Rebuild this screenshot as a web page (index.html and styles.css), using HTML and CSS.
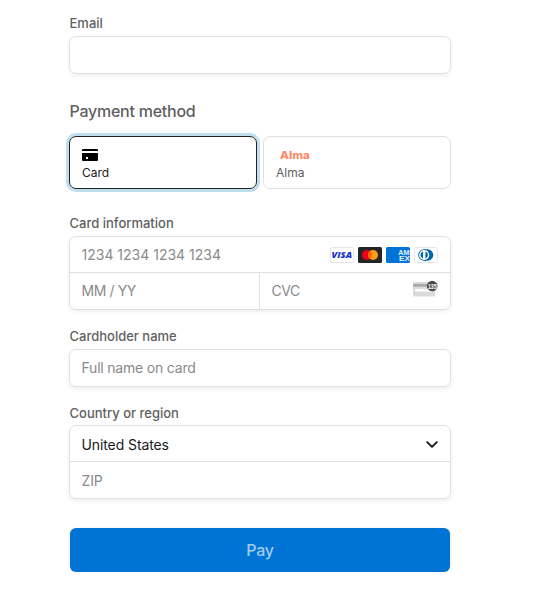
FILE: index.html
```html
<!DOCTYPE html>
<html lang="en">
  <head>
    <meta charset="utf-8">
    <meta name="viewport" content="width=device-width">
    <title>Payment</title>
    <link rel="stylesheet" href="styles.css">
  </head>
  <body>
    <form class="checkout">
      <div class="field field-email">
        <label for="email">Email</label>
        <div class="box"><input id="email" type="text"></div>
      </div>

      <h2>Payment method</h2>
      <div class="tabs">
        <div class="tab selected">
          <svg class="tab-icon" width="16" height="12" viewBox="0 0 16 12">
            <path d="M1 0h14a1 1 0 0 1 1 1v1H0V1a1 1 0 0 1 1-1z"/>
            <path d="M0 4h16v7a1 1 0 0 1-1 1H1a1 1 0 0 1-1-1z"/>
            <rect x="4" y="8" width="2" height="2" fill="#fff"/>
          </svg>
          <span>Card</span>
        </div>
        <div class="tab">
          <svg class="alma-logo" width="38" height="12" viewBox="0 0 38 12">
            <text x="4" y="10" textLength="30" lengthAdjust="spacingAndGlyphs">Alma</text>
          </svg>
          <span>Alma</span>
        </div>
      </div>

      <div class="field field-card">
        <label for="number">Card information</label>
        <div class="box">
          <div class="row">
            <input id="number" class="number" type="text" placeholder="1234 1234 1234 1234">
            <div class="brands">
              <svg width="24" height="16" viewBox="0 0 24 16">
                <rect x=".5" y=".5" width="23" height="15" rx="1" fill="#fff" stroke="#e6e6e6"/>
                <text class="visa" x="1.6" y="11.4" textLength="20.4" lengthAdjust="spacingAndGlyphs">VISA</text>
              </svg>
              <svg width="24" height="16" viewBox="0 0 24 16">
                <rect width="24" height="16" rx="1.5" fill="#252525"/>
                <circle cx="9" cy="8" r="5" fill="#eb001b"/>
                <circle cx="15" cy="8" r="5" fill="#f79e1b"/>
                <path d="M12 4a5 5 0 0 1 0 8 5 5 0 0 1 0-8z" fill="#ff5f00"/>
              </svg>
              <svg width="24" height="16" viewBox="0 0 24 16">
                <rect width="24" height="16" rx="1.5" fill="#0074d4"/>
                <text class="amex" x="12.2" y="7.6" textLength="11.2" lengthAdjust="spacingAndGlyphs">AM</text>
                <text class="amex" x="13" y="14" textLength="11" lengthAdjust="spacingAndGlyphs">EX</text>
              </svg>
              <svg width="24" height="16" viewBox="0 0 24 16">
                <rect x=".5" y=".5" width="23" height="15" rx="1" fill="#fff" stroke="#e6e6e6"/>
                <path d="M10 2.2h3.5a5.8 5.8 0 0 1 0 11.6H10z" fill="#0165ac"/>
                <circle cx="10" cy="8" r="5.8" fill="#0165ac"/>
                <circle cx="10.2" cy="8" r="5.1" fill="#fff"/>
                <path d="M9 4.4a3.8 3.8 0 0 0 0 7.2zM11.4 4.4a3.8 3.8 0 0 1 0 7.2z" fill="#0165ac"/>
              </svg>
            </div>
          </div>
          <div class="row">
            <input class="expiry" type="text" placeholder="MM / YY">
            <input class="cvc" type="text" placeholder="CVC">
            <svg class="cvc-icon" width="26" height="18" viewBox="0 0 26 18">
              <rect x="0" y="2" width="22" height="14.5" rx="1.5" fill="#dadada"/>
              <rect x="0" y="4" width="22" height="2.6" fill="#a9a9a9"/>
              <rect x="2" y="9" width="18" height="2.5" rx="1" fill="#fff"/>
              <circle cx="19.2" cy="6" r="5.3" fill="#4a4a4a"/>
              <text class="cvc-digits" x="15" y="8.6" textLength="8.6" lengthAdjust="spacingAndGlyphs">135</text>
            </svg>
          </div>
        </div>
      </div>

      <div class="field field-name">
        <label for="name">Cardholder name</label>
        <div class="box"><input id="name" type="text" placeholder="Full name on card"></div>
      </div>

      <div class="field field-country">
        <label for="country">Country or region</label>
        <div class="box">
          <div class="row">
            <select id="country">
              <option>United States</option>
            </select>
            <svg class="chevron" width="12" height="12" viewBox="0 0 12 12">
              <path d="M1.2 4.2 6 8.9l4.8-4.7" fill="none" stroke="#111" stroke-width="1.8" stroke-linecap="round" stroke-linejoin="round"/>
            </svg>
          </div>
          <div class="row"><input class="zip" type="text" placeholder="ZIP"></div>
        </div>
      </div>

      <button class="pay" type="button">Pay</button>
    </form>
  </body>
</html>
```

FILE: styles.css
```css
* {box-sizing: border-box;}
body {
	margin: 0;
	background: #fff;
	color: #5f5f5f;
	font-family: Inter, "Liberation Sans", sans-serif;
}
.checkout {
	width: 382px;
	margin: 0 0 0 69px;
	padding-top: 14px;
}
label {
	display: block;
	height: 18px;
	margin-bottom: 4px;
	padding-left: 0.5px;
	font-size: 13px;
	font-weight: 500;
	line-height: 18px;
}
h2 {
	margin: 26px 0 13px;
	padding-left: 0.5px;
	font-size: 16px;
	font-weight: 500;
	letter-spacing: -0.25px;
	line-height: 23px;
}
.box {
	border: 1px solid #e0e0e0;
	border-radius: 7px;
	box-shadow: 0 2px 4px rgba(0,0,0,0.07);
	overflow: hidden;
}
.row {
	display: flex;
	align-items: center;
	height: 37px;
}
.row:first-child {height: 35px;}
.row + .row {border-top: 1px solid #e0e0e0;}
input, select {
	flex: 1;
	display: block;
	width: 100%;
	min-width: 0;
	height: 36px;
	padding: 0 12px 0 11.5px;
	border: 0;
	outline: none;
	background: none;
	color: #1a1a1a;
	font: 14px/20px Inter, "Liberation Sans", sans-serif;
	letter-spacing: -0.1px;
	appearance: none;
}
select {padding-top: 2px;}
input::placeholder {color: #8a8a8a; opacity: 1;}
.number {letter-spacing: 0;}
#name {padding-bottom: 1px; letter-spacing: -0.2px;}

/* payment method tabs */
.tabs {
	display: grid;
	grid-template-columns: 1fr 1fr;
	gap: 6px;
}
.tab {
	display: flex;
	flex-direction: column;
	align-items: flex-start;
	height: 53px;
	padding: 12px 12px 0;
	border: 1px solid #e0e0e0;
	border-radius: 7px;
	font-size: 12px;
	line-height: 16px;
}
.tab.selected {
	border-color: #222;
	color: #1a1a1a;
	box-shadow: 0 0 0 3px #bfdef0;
}
.tab-icon, .alma-logo {margin-bottom: 4px;}
.alma-logo {
	fill: #fa8a6c;
	font-size: 11px;
	font-weight: 800;
}

/* card fields */
.field-card {margin-top: 25px;}
.brands {display: flex; gap: 4px; padding-right: 12px;}
.visa {
	fill: #1a34c8;
	font: italic 800 9.5px "Open Sans", sans-serif;
}
.amex {
	fill: #e6f2fc;
	font: 700 6.5px "Liberation Sans", sans-serif;
}
.expiry {flex: 0 0 190px; border-right: 1px solid #e0e0e0;}
.expiry, .cvc {padding-bottom: 1px; letter-spacing: -0.4px;}
.cvc-icon {margin: 0 11px 4px 0;}
.cvc-digits {
	fill: #fff;
	font: 700 6.5px "Liberation Sans", sans-serif;
}
.field-name {margin-top: 17px;}
.field-country {margin-top: 17px;}
.field-country label {margin-bottom: 3px;}
.zip {padding-top: 1px;}
.chevron {margin-right: 12px;}

.pay {
	display: block;
	width: 380px;
	height: 44px;
	margin: 29px 0 0 1px;
	border: 0;
	border-radius: 6px;
	background: #0074d4;
	box-shadow: 0 1px 3px rgba(0,0,0,0.14);
	color: #a3cdf0;
	font: 500 16px Inter, "Liberation Sans", sans-serif;
	letter-spacing: -0.3px;
}
```
